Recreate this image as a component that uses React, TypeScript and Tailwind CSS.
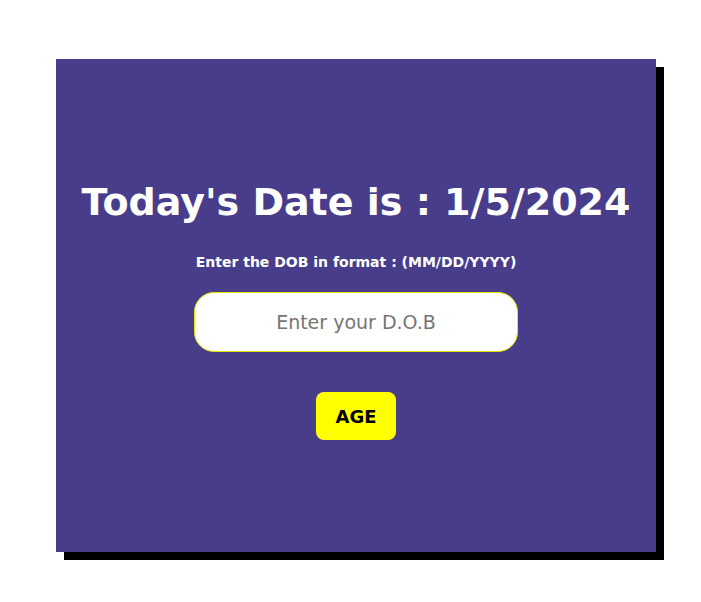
import { FC } from "react"

const App: FC = () => {
    return (
        <div className="min-h-[602px] w-[701px] bg-white pt-[59px] pl-[56px] font-['Comic_Sans_MS','DejaVu_Sans',sans-serif]">
            <div className="flex flex-col items-center w-[600px] h-[493px] bg-[#483d8b] shadow-[8px_8px_0_0_#000] pt-[119px]">
                <h1 className="text-[38px] leading-[48px] font-bold text-white whitespace-nowrap">Today's Date is : 1/5/2024</h1>
                <p className="mt-[26px] text-[14px] leading-[20px] font-semibold text-white">Enter the DOB in format : (MM/DD/YYYY)</p>
                <input
                    type="text"
                    placeholder="Enter your D.O.B"
                    className="mt-[20px] w-[324px] h-[60px] rounded-[20px] border border-[#e6e600] bg-white text-center text-[19px] text-gray-700 placeholder:text-[#757575] outline-none"
                />
                <button className="mt-[40px] w-[80px] h-[48px] rounded-[8px] bg-[#ffff00] text-[18px] font-bold text-black">AGE</button>
            </div>
        </div>
    )
}

export default App
